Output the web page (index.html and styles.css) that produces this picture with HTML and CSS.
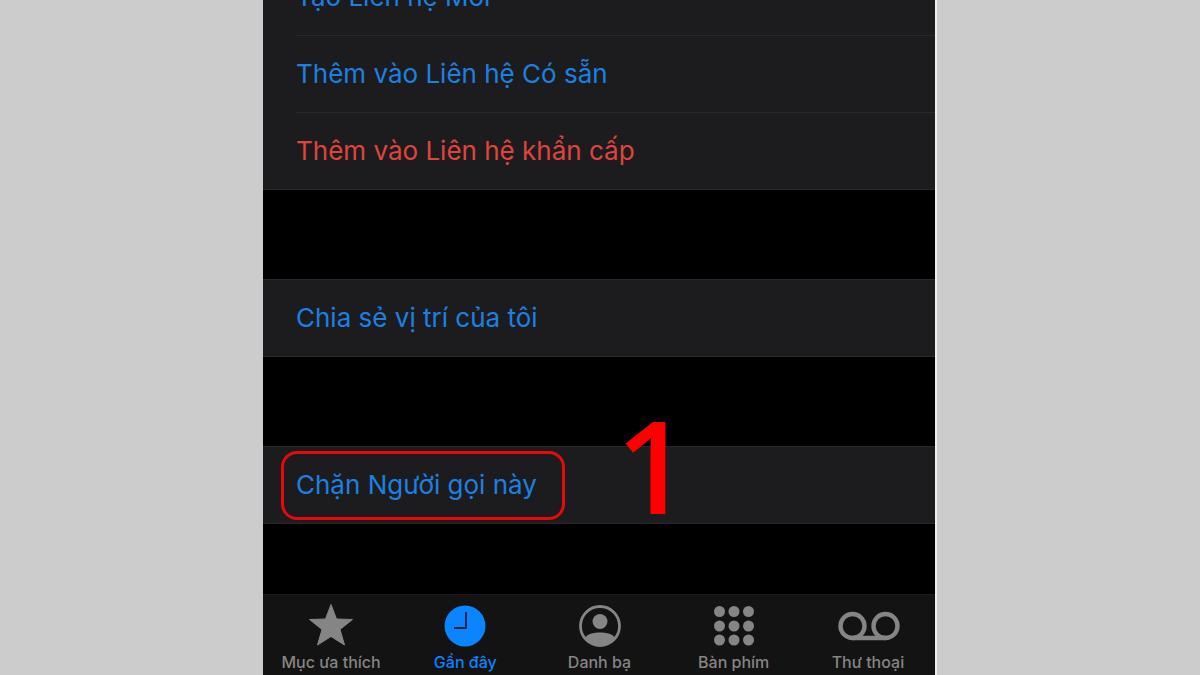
FILE: index.html
```html
<!DOCTYPE html>
<html lang="vi">
<head>
    <meta charset="UTF-8">
    <meta name="viewport" content="width=device-width, initial-scale=1.0">
    <title>Gần đây</title>
    <link rel="stylesheet" href="styles.css">
</head>
<body>
    <div class="phone">
        <main class="content">
            <div class="group">
                <button class="row">Tạo Liên hệ Mới</button>
                <button class="row">Thêm vào Liên hệ Có sẵn</button>
                <button class="row danger">Thêm vào Liên hệ khẩn cấp</button>
            </div>
            <div class="group">
                <button class="row">Chia sẻ vị trí của tôi</button>
            </div>
            <div class="group">
                <button class="row">Chặn Người gọi này</button>
                <!-- Step marker -->
                <span class="highlight"></span>
                <span class="step">1</span>
            </div>
        </main>

        <nav class="tab-bar">
            <a href="#favorites" class="tab">
                <svg width="48" height="44" viewBox="0 0 48 44">
                    <path d="M24 1.500 L29.500 16 L45.500 16.500 L33 26.500 L37.500 42 L24 33.500 L10.500 42 L15 26.500 L2.500 16.500 L18.500 16 Z" fill="currentColor" stroke="currentColor" stroke-linejoin="round"/>
                </svg>
                Mục ưa thích
            </a>
            <a href="#recents" class="tab active">
                <svg width="44" height="44" viewBox="0 0 44 44">
                    <circle cx="22" cy="23" r="20.500" fill="currentColor"/>
                    <path d="M23 9 V25 H11" fill="none" stroke="#10263f" stroke-width="2"/>
                </svg>
                Gần đây
            </a>
            <a href="#contacts" class="tab">
                <svg width="44" height="44" viewBox="0 0 44 44">
                    <circle cx="22" cy="23" r="19.500" fill="none" stroke="currentColor" stroke-width="2.800"/>
                    <circle cx="22" cy="18.500" r="7.500" fill="currentColor"/>
                    <path d="M7.500 34 C11 30.500 16 29.500 22 29.500 C28 29.500 33 30.500 36.500 34 C33 39 28 42 22 42 C16 42 11 39 7.500 34 Z" fill="currentColor"/>
                </svg>
                Danh bạ
            </a>
            <a href="#keypad" class="tab">
                <svg width="44" height="44" viewBox="0 0 44 44" fill="currentColor">
                    <circle cx="7.500" cy="8.500" r="5.500"/><circle cx="22" cy="8.500" r="5.500"/><circle cx="36.500" cy="8.500" r="5.500"/>
                    <circle cx="7.500" cy="23" r="5.500"/><circle cx="22" cy="23" r="5.500"/><circle cx="36.500" cy="23" r="5.500"/>
                    <circle cx="7.500" cy="37" r="5.500"/><circle cx="22" cy="37" r="5.500"/><circle cx="36.500" cy="37" r="5.500"/>
                </svg>
                Bàn phím
            </a>
            <a href="#voicemail" class="tab">
                <svg width="64" height="44" viewBox="0 0 64 44" fill="none" stroke="currentColor" stroke-width="4.400">
                    <circle cx="16.500" cy="23" r="12"/>
                    <circle cx="49.500" cy="23" r="12"/>
                    <path d="M16.500 35 H49.500"/>
                </svg>
                Thư thoại
            </a>
        </nav>
    </div>
</body>
</html>
```
FILE: styles.css
```css
* {
    box-sizing: border-box;
}
body {
    margin: 0;
    background-color: #cccccc;
    font-family: Inter, "Noto Sans", sans-serif;
}
.phone {
    display: flex;
    flex-direction: column;
    width: calc(56% + 2px);
    height: 100vh;
    margin: 0 auto;
    background-color: #000;
    border-right: 2px solid #eeeeee;
    overflow: hidden;
}
/* List is scrolled to its end, older rows leave at the top */
.content {
    flex: 1;
    min-height: 0;
    display: flex;
    flex-direction: column;
    justify-content: flex-end;
    gap: 89px;
    padding-bottom: 70px;
}
.group {
    position: relative;
    flex-shrink: 0;
    background-color: #1c1c1e;
    border-top: 1px solid #29292b;
    border-bottom: 1px solid #29292b;
}
.row {
    display: block;
    width: calc(100% - 33px);
    height: 76px;
    margin-left: 33px;
    padding: 0;
    border: none;
    background: none;
    color: #1c80e3;
    font-family: inherit;
    font-size: 26px;
    line-height: 32px;
    text-align: left;
    cursor: pointer;
}
.row + .row {
    height: 77px;
    border-top: 1px solid #29292b;
}
.row.danger {
    color: #e0443a;
}
.highlight {
    position: absolute;
    top: 4px;
    left: 18px;
    width: 284px;
    height: 69px;
    border: 3px solid #e8090d;
    border-radius: 16px;
}
.step {
    position: absolute;
    top: -47px;
    left: 353px;
    color: #ff0000;
    font-family: "Open Sans", sans-serif;
    font-size: 129px;
    font-weight: 600;
    line-height: 129px;
}
.tab-bar {
    display: flex;
    height: 81px;
    padding-left: 1px;
    background-color: #131313;
    border-top: 1px solid #1c1c1c;
}
.tab {
    flex: 1;
    display: flex;
    flex-direction: column;
    align-items: center;
    padding-top: 8px;
    gap: 5px;
    color: #858585;
    font-size: 16px;
    font-weight: 500;
    line-height: 20px;
    text-decoration: none;
    white-space: nowrap;
}
.tab svg {
    flex-shrink: 0;
}
.tab.active {
    color: #0a84ff;
}
```
